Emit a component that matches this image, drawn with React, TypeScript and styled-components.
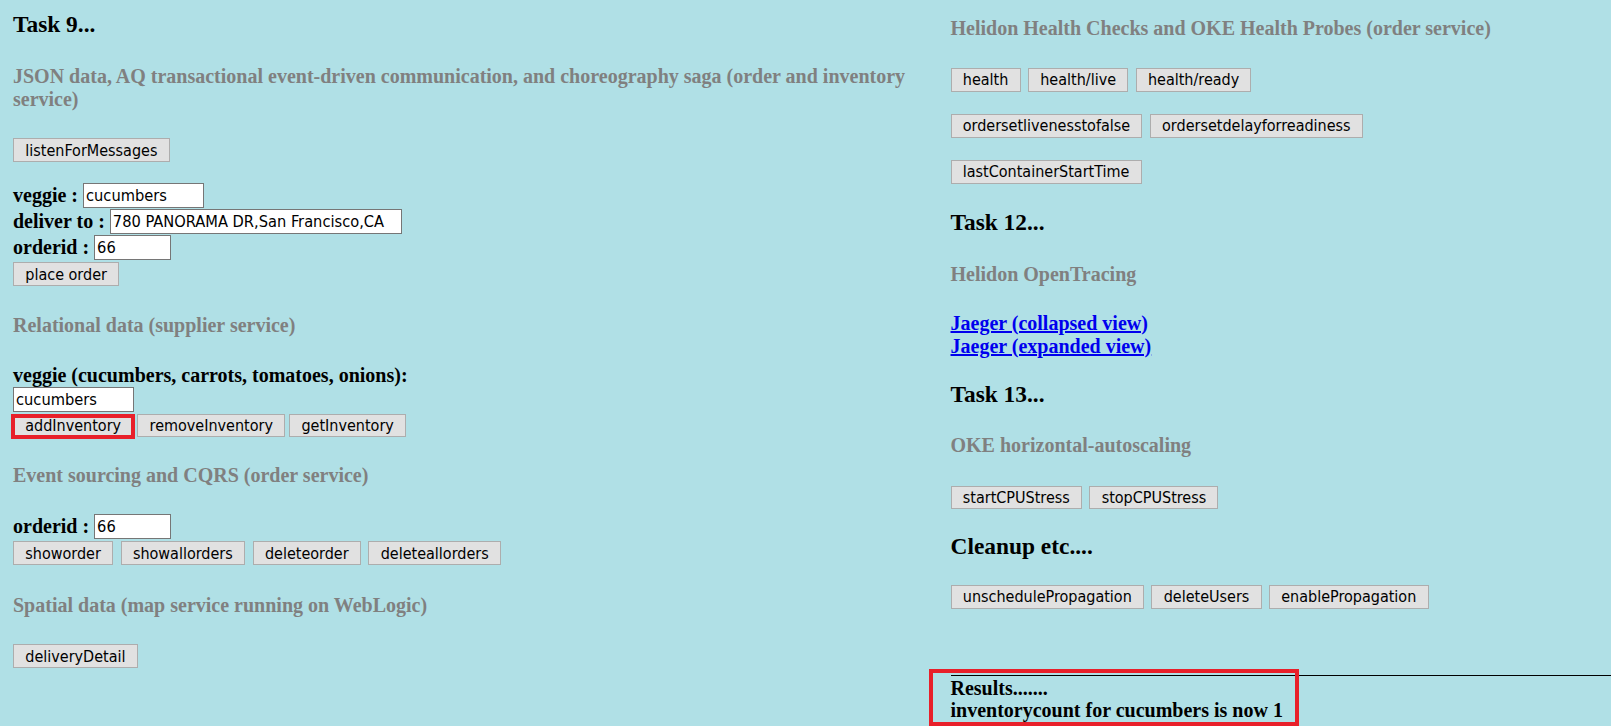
import React from "react";
import styled, { createGlobalStyle, css } from "styled-components";

const GlobalStyle = createGlobalStyle`
  html, body {
    margin: 0;
    padding: 0;
    background: #b0e0e6;
  }
  body {
    font-family: "Liberation Serif", "Times New Roman", serif;
    color: #000;
    overflow: hidden;
  }
`;

const Page = styled.div`
  display: flex;
  width: 1611px;
  height: 726px;
  overflow: hidden;
  background: #b0e0e6;
`;

const LeftColumn = styled.div`
  box-sizing: border-box;
  width: 950px;
  flex: none;
  padding: 11px 22px 0 13px;
  display: flex;
  flex-direction: column;
  align-items: flex-start;
`;

const RightColumn = styled.div`
  flex: 1;
  padding: 16.75px 0 0 0.5px;
  display: flex;
  flex-direction: column;
  align-items: flex-start;
`;

type Spaced = { $mt?: number };

const TaskTitle = styled.h3<Spaced>`
  margin: ${(p) => p.$mt ?? 0}px 0 0;
  font-size: 23.4px;
  line-height: 27px;
  font-weight: bold;
  color: #000;
`;

const SectionTitle = styled.h4<Spaced>`
  margin: ${(p) => p.$mt ?? 0}px 0 0;
  font-size: 20px;
  line-height: 23px;
  font-weight: bold;
  color: #808080;
`;

const FieldLabel = styled.label<Spaced>`
  display: block;
  margin-top: ${(p) => p.$mt ?? 0}px;
  font-size: 20px;
  line-height: 23px;
  font-weight: bold;
  white-space: nowrap;
`;

const FieldRow = styled.div<Spaced>`
  display: flex;
  align-items: center;
  gap: 5px;
  height: 25px;
  margin-top: ${(p) => p.$mt ?? 0}px;
`;

const TextInput = styled.input<{ $w: number } & Spaced>`
  box-sizing: border-box;
  width: ${(p) => p.$w}px;
  height: 25px;
  margin: ${(p) => p.$mt ?? 0}px 0 0;
  padding: 0 2px;
  border: 1px solid #767676;
  border-radius: 0;
  background: #fff;
  color: #000;
  font-family: "DejaVu Sans Condensed", "Liberation Sans", sans-serif;
  font-size: 16.3px;
  outline: none;
`;

const ButtonRow = styled.div<Spaced & { $gap?: number }>`
  display: flex;
  align-items: center;
  gap: ${(p) => p.$gap ?? 7.4}px;
  margin-top: ${(p) => p.$mt ?? 0}px;
`;

const ActionButton = styled.button<{ $flagged?: boolean }>`
  position: relative;
  box-sizing: border-box;
  height: 23.4px;
  margin: 0;
  padding: 0 11.25px;
  display: inline-flex;
  align-items: center;
  background: #e1e1e1;
  border: 1px solid #adadad;
  border-radius: 0;
  color: #000;
  font-family: "DejaVu Sans Condensed", "Liberation Sans", sans-serif;
  font-size: 16px;
  line-height: 19px;
  white-space: nowrap;
  cursor: default;
  ${(p) =>
    p.$flagged &&
    css`
      &::after {
        content: "";
        position: absolute;
        left: -3px;
        right: -3px;
        top: -1px;
        bottom: -3.5px;
        border: 4.7px solid #e8202a;
        pointer-events: none;
      }
    `}
`;

const LinkList = styled.div<Spaced>`
  display: flex;
  flex-direction: column;
  margin-top: ${(p) => p.$mt ?? 0}px;
`;

const TraceLink = styled.a`
  font-size: 20px;
  line-height: 23px;
  font-weight: bold;
  color: #0000ee;
  text-decoration: underline;
`;

const Results = styled.div<Spaced>`
  position: relative;
  align-self: stretch;
  margin-top: ${(p) => p.$mt ?? 0}px;
  border-top: 1px solid #000;
  padding-top: 1px;
`;

const ResultLine = styled.div`
  font-size: 20px;
  line-height: 22.4px;
  font-weight: bold;
  white-space: nowrap;
`;

const Highlight = styled.div`
  position: absolute;
  left: -21.5px;
  top: -7px;
  width: 370px;
  height: 57px;
  box-sizing: border-box;
  border: 4.6px solid #e8202a;
  pointer-events: none;
`;

export default function App() {
  return (
    <>
      <GlobalStyle />
      <Page>
        <LeftColumn>
          <TaskTitle>Task 9...</TaskTitle>
          <SectionTitle $mt={26.5}>
            JSON data, AQ transactional event-driven communication, and choreography saga (order and
            inventory service)
          </SectionTitle>
          <ButtonRow $mt={27.9}>
            <ActionButton>listenForMessages</ActionButton>
          </ButtonRow>

          <FieldRow $mt={21.6}>
            <FieldLabel>veggie :</FieldLabel>
            <TextInput $w={121} defaultValue="cucumbers" />
          </FieldRow>
          <FieldRow $mt={1}>
            <FieldLabel>deliver to :</FieldLabel>
            <TextInput $w={292} defaultValue="780 PANORAMA DR,San Francisco,CA" />
          </FieldRow>
          <FieldRow $mt={1}>
            <FieldLabel>orderid :</FieldLabel>
            <TextInput $w={77} defaultValue="66" />
          </FieldRow>
          <ButtonRow $mt={2}>
            <ActionButton>place order</ActionButton>
          </ButtonRow>

          <SectionTitle $mt={28.3}>Relational data (supplier service)</SectionTitle>
          <FieldLabel $mt={26.45}>veggie (cucumbers, carrots, tomatoes, onions):</FieldLabel>
          <TextInput $w={121} defaultValue="cucumbers" />
          <ButtonRow $mt={2} $gap={4}>
            <ActionButton $flagged>addInventory</ActionButton>
            <ActionButton>removeInventory</ActionButton>
            <ActionButton>getInventory</ActionButton>
          </ButtonRow>

          <SectionTitle $mt={27.15}>Event sourcing and CQRS (order service)</SectionTitle>
          <FieldRow $mt={27.3}>
            <FieldLabel>orderid :</FieldLabel>
            <TextInput $w={77} defaultValue="66" />
          </FieldRow>
          <ButtonRow $mt={2} $gap={7.6}>
            <ActionButton>showorder</ActionButton>
            <ActionButton>showallorders</ActionButton>
            <ActionButton>deleteorder</ActionButton>
            <ActionButton>deleteallorders</ActionButton>
          </ButtonRow>

          <SectionTitle $mt={29.3}>Spatial data (map service running on WebLogic)</SectionTitle>
          <ButtonRow $mt={27.3}>
            <ActionButton>deliveryDetail</ActionButton>
          </ButtonRow>
        </LeftColumn>

        <RightColumn>
          <SectionTitle>Helidon Health Checks and OKE Health Probes (order service)</SectionTitle>
          <ButtonRow $mt={28.55}>
            <ActionButton>health</ActionButton>
            <ActionButton>health/live</ActionButton>
            <ActionButton>health/ready</ActionButton>
          </ButtonRow>
          <ButtonRow $mt={22.6}>
            <ActionButton>ordersetlivenesstofalse</ActionButton>
            <ActionButton>ordersetdelayforreadiness</ActionButton>
          </ButtonRow>
          <ButtonRow $mt={22.6}>
            <ActionButton>lastContainerStartTime</ActionButton>
          </ButtonRow>

          <TaskTitle $mt={24.95}>Task 12...</TaskTitle>
          <SectionTitle $mt={27.8}>Helidon OpenTracing</SectionTitle>
          <LinkList $mt={25.3}>
            <TraceLink href="#">Jaeger (collapsed view)</TraceLink>
            <TraceLink href="#">Jaeger (expanded view)</TraceLink>
          </LinkList>

          <TaskTitle $mt={23.6}>Task 13...</TaskTitle>
          <SectionTitle $mt={26.1}>OKE horizontal-autoscaling</SectionTitle>
          <ButtonRow $mt={28.25}>
            <ActionButton>startCPUStress</ActionButton>
            <ActionButton>stopCPUStress</ActionButton>
          </ButtonRow>

          <TaskTitle $mt={23.85}>Cleanup etc....</TaskTitle>
          <ButtonRow $mt={25.35}>
            <ActionButton>unschedulePropagation</ActionButton>
            <ActionButton>deleteUsers</ActionButton>
            <ActionButton>enablePropagation</ActionButton>
          </ButtonRow>

          <Results $mt={66}>
            <Highlight />
            <ResultLine>Results.......</ResultLine>
            <ResultLine>inventorycount for cucumbers is now 1</ResultLine>
          </Results>
        </RightColumn>
      </Page>
    </>
  );
}
